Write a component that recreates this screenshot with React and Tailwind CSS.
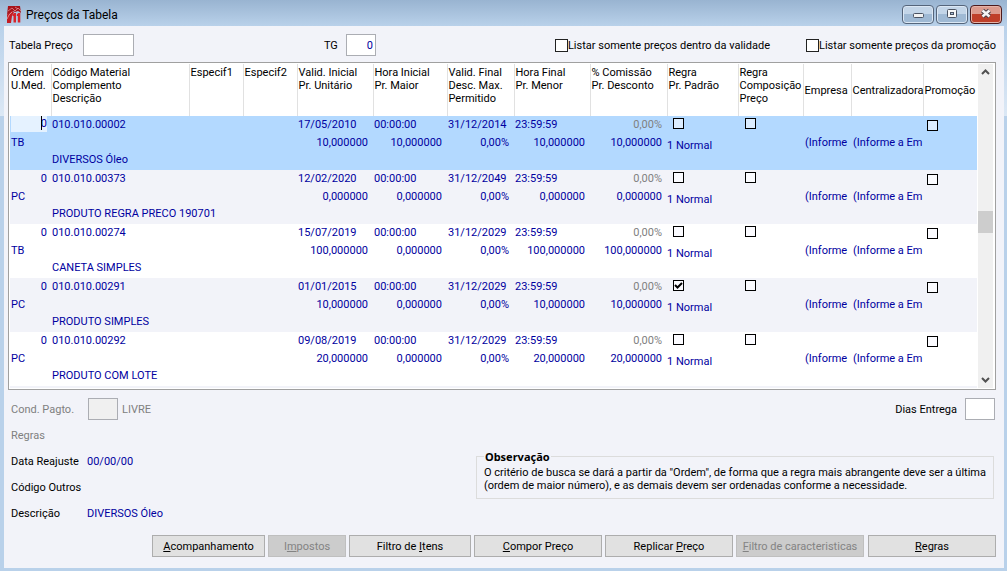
import React, { useState } from 'react';

const BLANK_ROW = {
  ordem: '0',
  horaInicial: '00:00:00',
  horaFinal: '23:59:59',
  descMax: '0,00%',
  comissao: '0,00%',
  regra: '1 Normal',
  empresa: '(Informe',
  centralizadora: '(Informe a Em',
};

const INITIAL_ROWS = [
  { ...BLANK_ROW, unidade: 'TB', codigo: '010.010.00002', descricao: 'DIVERSOS Óleo', inicio: '17/05/2010', fim: '31/12/2014', preco: '10,000000', maior: '10,000000' },
  { ...BLANK_ROW, unidade: 'PC', codigo: '010.010.00373', descricao: 'PRODUTO REGRA PRECO 190701', inicio: '12/02/2020', fim: '31/12/2049', preco: '0,000000', maior: '0,000000' },
  { ...BLANK_ROW, unidade: 'TB', codigo: '010.010.00274', descricao: 'CANETA SIMPLES', inicio: '15/07/2019', fim: '31/12/2029', preco: '100,000000', maior: '0,000000' },
  { ...BLANK_ROW, unidade: 'PC', codigo: '010.010.00291', descricao: 'PRODUTO SIMPLES', inicio: '01/01/2015', fim: '31/12/2029', preco: '10,000000', maior: '0,000000', padrao: true },
  { ...BLANK_ROW, unidade: 'PC', codigo: '010.010.00292', descricao: 'PRODUTO COM LOTE', inicio: '09/08/2019', fim: '31/12/2029', preco: '20,000000', maior: '0,000000' },
];

const COLUMNS = [
  { lines: ['Ordem', 'U.Med.'], width: 'w-[41px]' },
  { lines: ['Código Material', 'Complemento', 'Descrição'], width: 'w-auto' },
  { lines: ['Especif1'], width: 'w-[54px]' },
  { lines: ['Especif2'], width: 'w-[54px]' },
  { lines: ['Valid. Inicial', 'Pr. Unitário'], width: 'w-[76px]' },
  { lines: ['Hora Inicial', 'Pr. Maior'], width: 'w-[74px]' },
  { lines: ['Valid. Final', 'Desc. Max.', 'Permitido'], width: 'w-[67px]' },
  { lines: ['Hora Final', 'Pr. Menor'], width: 'w-[76px]' },
  { lines: ['% Comissão', 'Pr. Desconto'], width: 'w-[77px]' },
  { lines: ['Regra', 'Pr. Padrão'], width: 'w-[71px]' },
  { lines: ['Regra', 'Composição', 'Preço'], width: 'w-[65px]' },
  { lines: ['Empresa'], width: 'w-[48px]', middle: true },
  { lines: ['Centralizadora'], width: 'w-[72px]', middle: true },
  { lines: ['Promoção'], width: 'w-[54px]', middle: true },
];

const ACTIONS = [
  { before: '', key: 'A', after: 'companhamento', width: 'w-[113px]' },
  { before: 'I', key: 'm', after: 'postos', width: 'w-[78px]', disabled: true },
  { before: 'Filtro de ', key: 'I', after: 'tens', width: 'w-[122px]' },
  { before: '', key: 'C', after: 'ompor Preço', width: 'w-[128px]' },
  { before: 'Replicar ', key: 'P', after: 'reço', width: 'w-[128px]' },
  { before: '', key: 'F', after: 'iltro de caracteristicas', width: 'w-[128px]', disabled: true },
  { before: '', key: 'R', after: 'egras', width: 'w-[128px]' },
];

const Logo = () => (
  <svg width="14" height="17" viewBox="0 0 14 17" aria-hidden="true">
    <path d="M1 0h12l1 7-3-2-3 1-2-1-6 4z" fill="#a8141b" />
    <path d="M0 9l5-4 2 1-2 4-1 7H0z" fill="#c41d24" />
    <path d="M1 5l4-3 3 3 3-3 3 3M8 1l3 2" stroke="#d98a90" strokeWidth="0.8" fill="none" />
    <path d="M0 13l2-4 3-3" stroke="#e3a4a9" strokeWidth="0.8" fill="none" />
    <path d="M5.500 8.500L7 7h2v9.500H6.500V10h-1zM9.800 8.500L11.300 7h2v9.500h-2.500V10h-1z" fill="#d8232a" />
  </svg>
);

const TitleBar = () => {
  const frame = 'flex h-[19px] w-8 items-center justify-center rounded-sm border border-[#55657b] bg-linear-to-b from-[#c3d5e8] from-50% to-[#9fb9d4] to-50% shadow-[inset_0_0_0_1px_#dbe7f4]';

  return (
    <header className="flex h-[26px] items-center bg-linear-to-b from-[#99b4d1] to-[#b9d1ea] pt-0.5 pr-[5px] pl-[7px]">
      <Logo />
      <h1 className="ml-[5px] flex-1 pt-px text-xs text-black">Preços da Tabela</h1>
      <div className="flex gap-0.5">
        <button type="button" aria-label="Minimizar" className={frame}>
          <svg width="12" height="12" viewBox="0 0 12 12">
            <rect x="1.5" y="5.5" width="10" height="4" rx="1" fill="#f2f2f2" stroke="#4b5362" />
          </svg>
        </button>
        <button type="button" aria-label="Restaurar" className={frame}>
          <svg width="12" height="12" viewBox="0 0 12 12">
            <rect x="1.5" y="1.5" width="9" height="8" rx="1" fill="#f7f7f7" stroke="#4b5362" />
            <rect x="4.5" y="4.5" width="3" height="2" fill="#a9c0d9" stroke="#4b5362" />
          </svg>
        </button>
        <button type="button" aria-label="Fechar" className="flex h-[19px] w-8 items-center justify-center rounded-sm border border-[#4c1a1c] bg-linear-to-b from-[#dc9b8e] from-50% to-[#bf3f29] to-50% shadow-[inset_0_0_0_1px_#e5b3a8]">
          <svg width="12" height="12" viewBox="0 0 12 12">
            <path d="M2.500 2.500l7 6M9.500 2.500l-7 6" stroke="#4b4048" strokeWidth="4.500" />
            <path d="M2.500 2.500l7 6M9.500 2.500l-7 6" stroke="#f5f5f5" strokeWidth="2.500" />
          </svg>
        </button>
      </div>
    </header>
  );
};

const GridCheck = ({ label, checked, onChange, selected }) => (
  <span className="relative block size-[11px]">
    <input
      type="checkbox"
      aria-label={label}
      checked={checked}
      onChange={onChange}
      className={`block size-[11px] appearance-none border border-black ${selected ? 'bg-[#dcedff]' : 'bg-[#fbfbff]'}`}
    />
    {checked && (
      <svg className="pointer-events-none absolute inset-0" width="11" height="11" viewBox="0 0 11 11">
        <path d="M2 5l2.500 2.500L9 3" fill="none" stroke="#000" strokeWidth="2" />
      </svg>
    )}
  </span>
);

const FilterCheck = ({ id, label }) => (
  <div className="flex items-center">
    <input id={id} type="checkbox" className="size-[13px] appearance-none border border-[#222] bg-white checked:bg-[#222]" />
    <label htmlFor={id}>{label}</label>
  </div>
);

// date or time on the first line, amount on the second
const ValueCell = ({ top, bottom, muted }) => (
  <td className="pr-[5px] pl-px align-top">
    <div className={muted ? 'text-right text-[#808080]' : ''}>{top}</div>
    <div className="text-right">{bottom}</div>
  </td>
);

const PriceRow = ({ row, index, selected, onToggle }) => {
  const background = selected ? 'bg-[#b3d9ff]' : index % 2 ? 'bg-[#f2f3f9]' : 'bg-white';
  const toggle = field => () => onToggle(index, field);

  return (
    <tr className={`h-[54px] leading-[18px] whitespace-nowrap text-[#0000a0] ${background}`}>
      <td className="pr-1 pl-px align-top">
        {selected ? (
          <div className="relative mb-0.5">
            <input aria-label="Ordem" defaultValue={row.ordem} className="block h-4 w-full bg-[#e5f2ff] text-right outline-none" />
            <span className="absolute top-0 right-[5px] h-[14px] w-px bg-black" />
          </div>
        ) : (
          <div className="text-right">{row.ordem}</div>
        )}
        <div>{row.unidade}</div>
      </td>
      <td className="pl-px align-top">
        <div>{row.codigo}</div>
        <div className="h-[17px]" />
        <div>{row.descricao}</div>
      </td>
      <td />
      <td />
      <ValueCell top={row.inicio} bottom={row.preco} />
      <ValueCell top={row.horaInicial} bottom={row.maior} />
      <ValueCell top={row.fim} bottom={row.descMax} />
      <ValueCell top={row.horaFinal} bottom={row.preco} />
      <ValueCell top={row.comissao} bottom={row.preco} muted />
      <td className="pt-0.5 align-top">
        <div className="pl-1.5">
          <GridCheck label="Regra preço padrão" checked={!!row.padrao} onChange={toggle('padrao')} selected={selected} />
        </div>
        <div className="mt-2">{row.regra}</div>
      </td>
      <td className="pt-0.5 pl-[7px] align-top">
        <GridCheck label="Regra composição preço" checked={!!row.composicao} onChange={toggle('composicao')} selected={selected} />
      </td>
      <td className="pt-[18px] pl-0.5 align-top">{row.empresa}</td>
      <td className="pt-[18px] pl-0.5 align-top">{row.centralizadora}</td>
      <td className="pt-1 pl-1 align-top">
        <GridCheck label="Promoção" checked={!!row.promocao} onChange={toggle('promocao')} selected={selected} />
      </td>
    </tr>
  );
};

const PriceGrid = ({ rows, onToggle }) => (
  <div className="flex border border-[#a0a0a0] bg-white py-px pr-0.5 pl-px">
    <div className="min-w-0 flex-1 overflow-hidden">
      <table className="w-full table-fixed border-collapse">
        <thead>
          <tr className="h-[52px]">
            {COLUMNS.map(column => (
              <th
                key={column.lines.join(' ')}
                scope="col"
                className={`${column.width} border-r border-[#e1e1e1] pl-px text-left leading-[13px] font-normal whitespace-nowrap last:border-r-0 ${column.middle ? 'align-middle' : 'pt-0.5 align-top'}`}
              >
                {column.lines.map(line => (
                  <div key={line}>{line}</div>
                ))}
              </th>
            ))}
          </tr>
        </thead>
        <tbody>
          {rows.map((row, index) => (
            <PriceRow key={row.codigo} row={row} index={index} selected={index === 0} onToggle={onToggle} />
          ))}
        </tbody>
      </table>
      <div className="h-0.5 bg-[#f2f3f9]" />
    </div>
    <div className="ml-px flex w-[15px] flex-col items-center bg-[#f0f0f0] py-1" aria-hidden="true">
      <svg width="9" height="9" viewBox="0 0 9 9">
        <path d="M1 6l3.500-3.500L8 6" fill="none" stroke="#505050" strokeWidth="2" />
      </svg>
      <div className="h-[134px]" />
      <div className="h-[22px] w-full bg-[#cdcdcd]" />
      <div className="flex-1" />
      <svg width="9" height="9" viewBox="0 0 9 9">
        <path d="M1 3l3.500 3.500L8 3" fill="none" stroke="#505050" strokeWidth="2" />
      </svg>
    </div>
  </div>
);

const App = () => {
  const [rows, setRows] = useState(INITIAL_ROWS);

  const toggleField = (index, field) => {
    setRows(rows.map((row, i) => (i === index ? { ...row, [field]: !row[field] } : row)));
  };

  const box = 'h-[22px] border border-[#abadb3] bg-white px-0.5 text-right text-[#0000a0]';

  return (
    <div className="flex min-h-screen flex-col bg-[#b9d1ea] bg-[linear-gradient(#b9d1ea_26px,#dce8f5_116px,#b9d1ea_116px)] font-[Roboto,sans-serif] text-[11px] leading-[13px] text-black">
      <TitleBar />

      <main className="mr-[3px] mb-[3px] ml-1 flex flex-1 flex-col bg-[#f2f3f9] pt-2 pr-2 pb-[11px] pl-1">
        {/* filters */}
        <div className="mb-1.5 flex items-center pl-px">
          <label htmlFor="tabela" className="w-[74px]">Tabela Preço</label>
          <input id="tabela" className={`${box} w-[51px]`} />
          <label htmlFor="tg" className="ml-auto w-[22px]">TG</label>
          <input id="tg" defaultValue="0" className={`${box} mr-[179px] w-[30px]`} />
          <FilterCheck id="validade" label="Listar somente preços dentro da validade" />
          <div className="ml-9">
            <FilterCheck id="promocao" label="Listar somente preços da promoção" />
          </div>
        </div>

        <PriceGrid rows={rows} onToggle={toggleField} />

        {/* details of the selected price */}
        <div className="mt-2 flex items-center pr-px pl-[3px]">
          <label htmlFor="pagto" className="w-[77px] text-[#808080]">Cond. Pagto.</label>
          <input id="pagto" disabled className="mr-1 h-[22px] w-[30px] border border-[#abadb3] bg-[#f0f0f0]" />
          <span className="text-[#808080]">LIVRE</span>
          <label htmlFor="dias" className="mr-2 ml-auto">Dias Entrega</label>
          <input id="dias" className={`${box} w-[30px]`} />
        </div>

        <div className="flex items-start">
          <dl className="mt-0.5 grid flex-1 grid-cols-[76px_1fr] auto-rows-[26px] items-center pl-[3px]">
            <dt className="text-[#808080]">Regras</dt>
            <dd />
            <dt>Data Reajuste</dt>
            <dd className="text-[#0000a0]">00/00/00</dd>
            <dt>Código Outros</dt>
            <dd />
            <dt>Descrição</dt>
            <dd className="text-[#0000a0]">{rows[0].descricao}</dd>
          </dl>
          <fieldset className="mt-[30px] mr-0.5 w-[518px] border border-[#dcdcdc] px-[7px] pb-1.5">
            <legend className="px-px font-['Noto_Sans',sans-serif] font-bold">Observação</legend>
            <p className="pt-[3px] whitespace-nowrap">
              O critério de busca se dará a partir da "Ordem", de forma que a regra mais abrangente deve ser a última
              <br />
              (ordem de maior número), e as demais devem ser ordenadas conforme a necessidade.
            </p>
          </fieldset>
        </div>

        <div className="mt-auto flex justify-end gap-[3px]">
          {ACTIONS.map(action => (
            <button
              key={action.before + action.key + action.after}
              type="button"
              disabled={action.disabled}
              className={`h-[22px] border border-[#adadad] bg-[#e1e1e1] whitespace-nowrap last:ml-px disabled:border-[#bfbfbf] disabled:bg-[#cccccc] disabled:text-[#838383] ${action.width}`}
            >
              {action.before}
              <u>{action.key}</u>
              {action.after}
            </button>
          ))}
        </div>
      </main>
    </div>
  );
};

export default App;
